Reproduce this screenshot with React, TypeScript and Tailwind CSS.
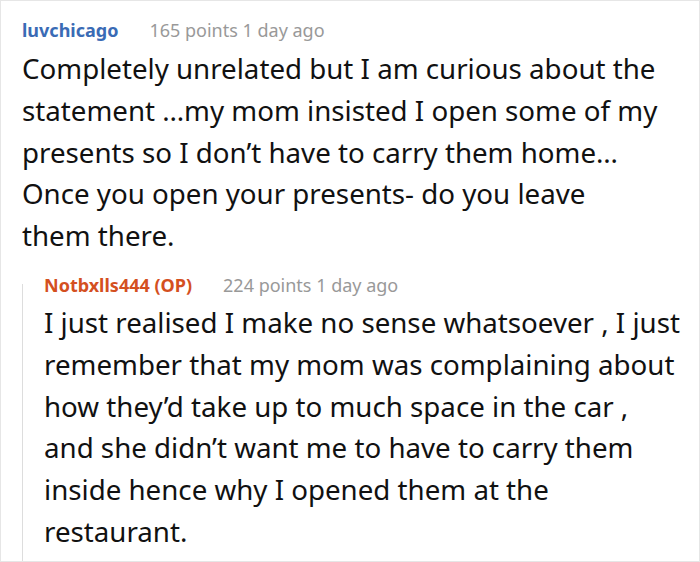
export default function App() {
  return (
    <div className="w-[700px] h-[562px] bg-white border border-[#e6e6e6] pl-[21px] pt-[17px] font-['Noto_Sans',sans-serif] overflow-hidden">
      <div className="flex items-center h-[24px] text-[18px] leading-[24px]">
        <span className="font-bold text-[#3a6bb5]">luvchicago</span>
        <span className="ml-[31px] text-[#999999]">165 points 1 day ago</span>
      </div>
      <p className="mt-[6px] text-[27.7px] leading-[41.8px] text-[#111111] w-[676px] whitespace-nowrap">
        Completely unrelated but I am curious about the
        <br />
        statement …my mom insisted I open some of my
        <br />
        presents so I don’t have to carry them home…
        <br />
        Once you open your presents- do you leave
        <br />
        them there.
      </p>
      <div className="relative mt-[16px] pl-[22px]">
        <div className="absolute left-0 top-[11px] bottom-[-10px] w-[1px] bg-[#dddddd]" />
        <div className="flex items-center h-[24px] text-[18px] leading-[24px]">
          <span className="font-bold text-[#d4501f]">Notbxlls444 (OP)</span>
          <span className="ml-[31px] text-[#999999]">224 points 1 day ago</span>
        </div>
        <p className="mt-[5px] text-[27.7px] leading-[41.8px] text-[#111111] w-[656px] whitespace-nowrap">
          I just realised I make no sense whatsoever , I just
          <br />
          remember that my mom was complaining about
          <br />
          how they’d take up to much space in the car ,
          <br />
          and she didn’t want me to have to carry them
          <br />
          inside hence why I opened them at the
          <br />
          restaurant.
        </p>
      </div>
    </div>
  );
}
